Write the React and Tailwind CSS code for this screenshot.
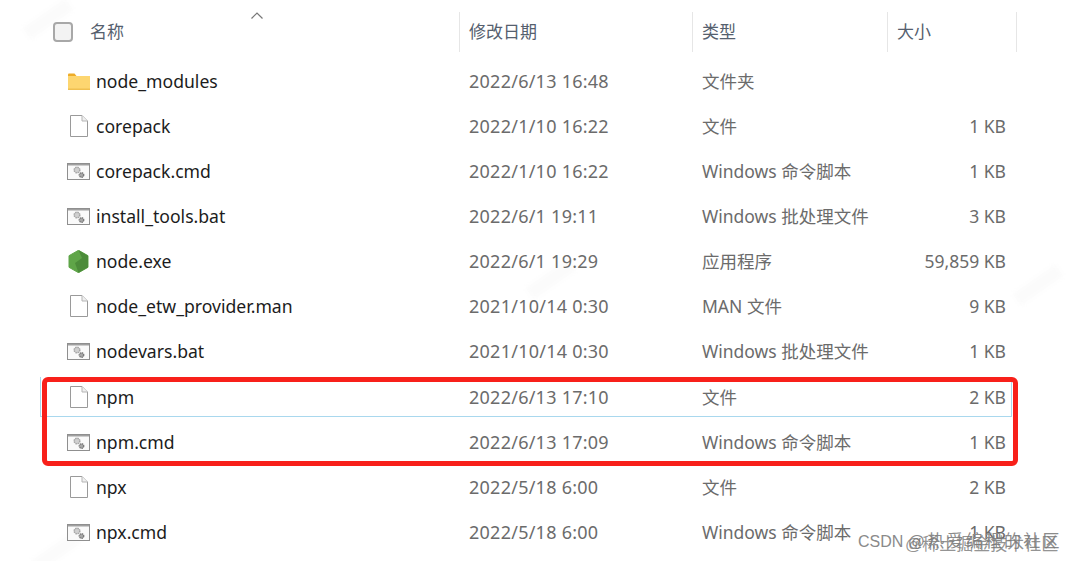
import React from 'react';

const FONT = "font-['Noto_Sans','Noto_Sans_CJK_SC',sans-serif]";

const FILES = [
  { name: 'node_modules', date: '2022/6/13 16:48', type: '文件夹', size: '', icon: 'folder' },
  { name: 'corepack', date: '2022/1/10 16:22', type: '文件', size: '1 KB', icon: 'file' },
  { name: 'corepack.cmd', date: '2022/1/10 16:22', type: 'Windows 命令脚本', size: '1 KB', icon: 'cmd' },
  { name: 'install_tools.bat', date: '2022/6/1 19:11', type: 'Windows 批处理文件', size: '3 KB', icon: 'cmd' },
  { name: 'node.exe', date: '2022/6/1 19:29', type: '应用程序', size: '59,859 KB', icon: 'node' },
  { name: 'node_etw_provider.man', date: '2021/10/14 0:30', type: 'MAN 文件', size: '9 KB', icon: 'file' },
  { name: 'nodevars.bat', date: '2021/10/14 0:30', type: 'Windows 批处理文件', size: '1 KB', icon: 'cmd' },
  { name: 'npm', date: '2022/6/13 17:10', type: '文件', size: '2 KB', icon: 'file', selected: true },
  { name: 'npm.cmd', date: '2022/6/13 17:09', type: 'Windows 命令脚本', size: '1 KB', icon: 'cmd' },
  { name: 'npx', date: '2022/5/18 6:00', type: '文件', size: '2 KB', icon: 'file' },
  { name: 'npx.cmd', date: '2022/5/18 6:00', type: 'Windows 命令脚本', size: '1 KB', icon: 'cmd' },
];

const FolderIcon = () => (
  <svg width="22" height="17" viewBox="0 0 22 17">
    <path d="M0 1.500Q0 .5 1 .5H6.500L8.500 3H0Z" fill="#eeac28" />
    <rect x="0" y="3" width="22" height="14" fill="#fdd670" />
    <rect x="0" y="15.500" width="22" height="1.500" fill="#f0c050" />
  </svg>
);

const FileIcon = () => (
  <svg width="18" height="22" viewBox="0 0 18 22">
    <path d="M.5.5H12L17.500 6V21.500H.5Z" fill="#fff" stroke="#9a9a9a" />
    <path d="M12 .5V6H17.500" fill="#f0f0f0" stroke="#b5b5b5" />
  </svg>
);

const CmdIcon = () => (
  <svg width="23" height="17" viewBox="0 0 23 17">
    <rect x=".5" y=".5" width="22" height="16" fill="#fafafa" stroke="#8f8f8f" />
    <rect x="1" y="1" width="21" height="1.500" fill="#a0a0a0" />
    <circle cx="10" cy="7" r="2.800" fill="#d0d0d0" stroke="#a5a5a5" strokeWidth="1.500" strokeDasharray="1.500 0.700" />
    <circle cx="14.500" cy="12" r="2.200" fill="#a8a8a8" stroke="#7a7a7a" strokeWidth="1.400" strokeDasharray="1.300 0.600" />
  </svg>
);

const NodeIcon = () => (
  <svg width="21" height="23" viewBox="0 0 21 23">
    <path d="M10.500 .3L20 5.700V17.300L10.500 22.700L1 17.300V5.700Z" fill="#5fa548" stroke="#5fa548" strokeLinejoin="round" />
    <path d="M10.500 .3L20 5.700V17.300L10.500 22.700L7 13L14 8Z" fill="#4c8c3a" />
  </svg>
);

const ICONS = { folder: FolderIcon, file: FileIcon, cmd: CmdIcon, node: NodeIcon };

function Row({ file }) {
  const Icon = ICONS[file.icon];
  return (
    <div className={`relative grid grid-cols-[417px_233px_195px_119px] items-center w-[964px] h-[45px] ${file.selected ? 'mt-[1px]' : ''}`}>
      {file.selected && (
        <div className="absolute -left-[2px] top-[2px] bottom-[3px] w-[972px] border-x border-b border-[#a9d8ee]" />
      )}
      <div className="relative flex items-center pl-[25px]">
        <span className="w-[23px] flex justify-center"><Icon /></span>
        <span className="ml-[6px] text-[17.600px] text-[#1c1c1c]">{file.name}</span>
      </div>
      <span className="relative pl-[10px] text-[18px] tracking-[0.25px] text-[#6b6b6b]">{file.date}</span>
      <span className="relative pl-[10px] text-[17.500px] text-[#6b6b6b]">{file.type}</span>
      <span className="relative text-[17.500px] text-[#6b6b6b] text-right">{file.size}</span>
    </div>
  );
}

function HeaderCell({ label, className }) {
  return (
    <div className={`flex items-center h-[40px] border-l border-[#e6e6e6] pl-[9px] text-[17px] text-[#55606e] ${className}`}>{label}</div>
  );
}

// faint diagonal site marks in the background, too pale to read
function FaintMark({ className }) {
  return (
    <div className={`absolute w-[52px] h-[14px] -rotate-[35deg] bg-[#fbfbfb] blur-[2px] ${className}`} />
  );
}

export default function App() {
  return (
    <div className={`relative w-[1070px] h-[561px] overflow-hidden bg-white ${FONT}`}>
      <FaintMark className="left-[22px] top-[12px]" />
      <FaintMark className="left-[525px] top-[272px]" />
      <FaintMark className="left-[1012px] top-[278px]" />
      <FaintMark className="left-[30px] top-[545px]" />

      <div className="relative pt-[12px] pl-[53px]">
        <div className="relative flex">
          <div className="flex items-center w-[406px] h-[40px]">
            <span className="w-[20px] h-[20px] rounded-[4px] border-2 border-[#a8a8a8] bg-[#f3f3f3]" />
            <span className="ml-[17px] text-[17px] text-[#55606e]">名称</span>
          </div>
          <HeaderCell label="修改日期" className="w-[233px]" />
          <HeaderCell label="类型" className="w-[195px]" />
          <HeaderCell label="大小" className="w-[130px] border-r" />
          <svg className="absolute left-[198px] top-[0px]" width="12" height="7" viewBox="0 0 12 7" fill="none" stroke="#777" strokeWidth="1.200">
            <path d="M.5 6.500L6 1L11.500 6.500" />
          </svg>
        </div>
      </div>

      <div className="relative mt-[7px] ml-[42px]">
        {FILES.map(f => <Row key={f.name} file={f} />)}
      </div>

      {/* red annotation */}
      <div className="absolute left-[42px] top-[377px] w-[976px] h-[89px] border-[5px] border-[#f8201a] rounded-[6px]" />

      {/* CSDN watermark, two marks stamped on top of each other */}
      <div className="absolute left-[858px] top-[530px] text-[16px] leading-[24px] text-[#8a8a8a] whitespace-nowrap font-['Liberation_Sans','Noto_Sans_CJK_SC',sans-serif]">
        CSDN <span className="text-[17px] tracking-[2.200px]">@热爱编程的社区</span>
      </div>
      <div className="absolute left-[905px] top-[533px] text-[17px] leading-[24px] text-[#777]/80 whitespace-nowrap font-['Liberation_Sans','Noto_Sans_CJK_SC',sans-serif]">
        @稀土掘金技术社区
      </div>
    </div>
  );
}
